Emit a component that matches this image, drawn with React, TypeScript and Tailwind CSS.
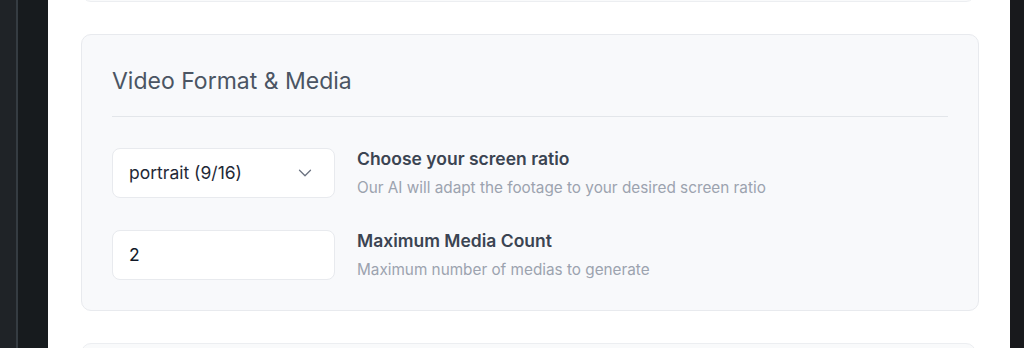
import { ChevronDown } from "lucide-react";

const font = { fontFamily: "Inter, 'Noto Sans', sans-serif" };

export default function App() {
  return (
    <div className="flex h-[348px] w-[1024px] overflow-hidden bg-[#18191c]" style={font}>
      <div className="flex h-full w-[48px] shrink-0">
        <div className="h-full w-[16px] bg-[#1f2327]" />
        <div className="h-full w-[2px] bg-[#353c42]" />
        <div className="h-full flex-1 bg-[#171b1e]" />
      </div>
      <div className="flex h-full w-[962px] shrink-0 flex-col bg-white px-[33px]">
        <div className="-mt-[20px] h-[22px] w-[895px] shrink-0 rounded-[10px] border border-[#eceef1] bg-[#f9fafb]" />
        <section className="mt-[32px] flex w-[898px] shrink-0 flex-col rounded-[10px] border border-[#e8eaee] bg-[#f8f9fb] px-[30px] pt-[32px] pb-[30px]">
          <h2 className="text-[23px] leading-[28px] font-normal text-[#4b5563]">Video Format &amp; Media</h2>
          <div className="mt-[21px] h-px w-full bg-[#e3e6ea]" />
          <div className="mt-[31px] flex flex-col gap-[32px]">
            <div className="flex items-center gap-[22px]">
              <button className="flex h-[50px] w-[223px] items-center justify-between rounded-[8px] border border-[#e8eaee] bg-white pr-[18px] pl-[16px] text-[17.5px] text-[#1f2937]">
                <span>portrait (9/16)</span>
                <ChevronDown className="h-[22px] w-[22px] text-[#6b7280]" strokeWidth={1.4} />
              </button>
              <div className="flex flex-col gap-[8px]">
                <div className="text-[17.5px] leading-[22px] font-semibold text-[#3b4452]">Choose your screen ratio</div>
                <div className="text-[15.3px] leading-[20px] text-[#9ca3af]">Our AI will adapt the footage to your desired screen ratio</div>
              </div>
            </div>
            <div className="flex items-center gap-[22px]">
              <div className="flex h-[50px] w-[223px] items-center rounded-[8px] border border-[#e8eaee] bg-white pl-[16px] text-[17.5px] text-[#111827]">
                2
              </div>
              <div className="flex flex-col gap-[8px]">
                <div className="text-[17.5px] leading-[22px] font-semibold text-[#3b4452]">Maximum Media Count</div>
                <div className="text-[15.3px] leading-[20px] text-[#9ca3af]">Maximum number of medias to generate</div>
              </div>
            </div>
          </div>
        </section>
        <div className="mt-[32px] h-[40px] w-[895px] shrink-0 rounded-[10px] border border-[#eceef1] bg-[#f9fafb]" />
      </div>
      <div className="h-full flex-1 bg-[#18191c]" />
    </div>
  );
}
